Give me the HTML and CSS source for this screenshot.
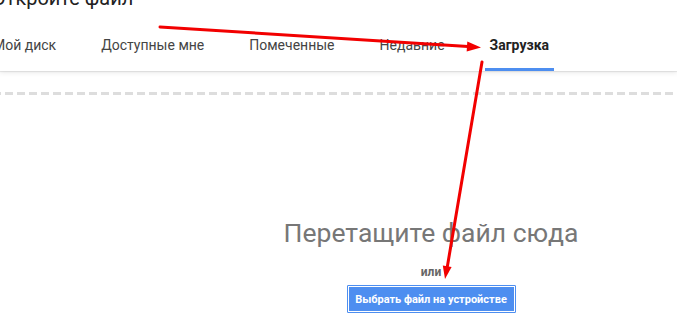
FILE: index.html
```html
<!DOCTYPE html>
<html lang="ru">
<head>
<meta charset="utf-8">
<title>Откройте файл</title>
<link rel="stylesheet" href="styles.css">
</head>
<body>
<header class="header">
  <div class="title">Откройте файл</div>
  <nav class="tabs">
    <div class="tab">Мой диск</div>
    <div class="tab">Доступные мне</div>
    <div class="tab">Помеченные</div>
    <div class="tab">Недавние</div>
    <div class="tab active">Загрузка</div>
  </nav>
</header>
<main class="dropzone">
  <div class="drop-text">Перетащите файл сюда</div>
  <div class="or">или</div>
  <button class="pick">Выбрать файл на устройстве</button>
</main>
<svg class="arrows" width="677" height="336" viewBox="0 0 677 336">
  <line x1="160" y1="27" x2="468" y2="46.6" stroke="#f20000" stroke-width="3" stroke-linecap="round"/>
  <polygon points="481,47.5 467.3,41.6 466.7,51.6" fill="#f20000"/>
  <line x1="482" y1="62" x2="447.4" y2="266.2" stroke="#f20000" stroke-width="3" stroke-linecap="round"/>
  <polygon points="445,279 451.6,267 442.8,265.4" fill="#f20000"/>
</svg>
</body>
</html>
```
FILE: styles.css
```css
html, body {
  margin: 0;
  padding: 0;
  width: 677px;
  height: 336px;
  overflow: hidden;
  background: #fff;
  font-family: Roboto, "Noto Sans", Arial, sans-serif;
}

.header {
  display: flex;
  flex-direction: column;
  height: 71px;
  background: #fff;
  box-shadow: 0 1px 1px rgba(0, 0, 0, 0.08), 0 2px 5px rgba(0, 0, 0, 0.08);
  position: relative;
  z-index: 1;
}

.title {
  margin-top: -14px;
  margin-left: -8px;
  height: 24px;
  font-size: 20px;
  line-height: 24px;
  color: #222;
  white-space: nowrap;
}

.tabs {
  display: flex;
  gap: 35px;
  margin-left: -12px;
}

.tab {
  padding: 27px 5px 15px;
  line-height: 16px;
  font-size: 14px;
  color: #444;
  border-bottom: 3px solid transparent;
  white-space: nowrap;
}

.tab.active {
  font-weight: bold;
  color: #222;
  border-bottom-color: #4d8ef0;
}

.dropzone {
  margin-top: 21px;
  width: 862px;
  padding-top: 126px;
  display: flex;
  flex-direction: column;
  align-items: center;
  background-image: linear-gradient(90deg, #ddd 0 8px, transparent 8px 12px);
  background-size: 12px 3px;
  background-position: 5px 0;
  background-repeat: repeat-x;
}

.drop-text {
  font-size: 26.5px;
  line-height: 30px;
  color: #777;
  white-space: nowrap;
}

.or {
  margin-top: 16px;
  font-size: 12px;
  line-height: 16px;
  font-weight: bold;
  color: #666;
}

.pick {
  margin-top: 5px;
  width: 169px;
  height: 28px;
  padding: 0;
  border: 1px solid #4d8ef0;
  box-shadow: inset 0 0 0 1px #fff;
  background: #4d8ef0;
  color: #fff;
  font-family: Roboto, Arial, sans-serif;
  font-size: 11px;
  font-weight: bold;
  border-radius: 1px;
}

.arrows {
  position: absolute;
  top: 0;
  left: 0;
  pointer-events: none;
  z-index: 2;
}
```
